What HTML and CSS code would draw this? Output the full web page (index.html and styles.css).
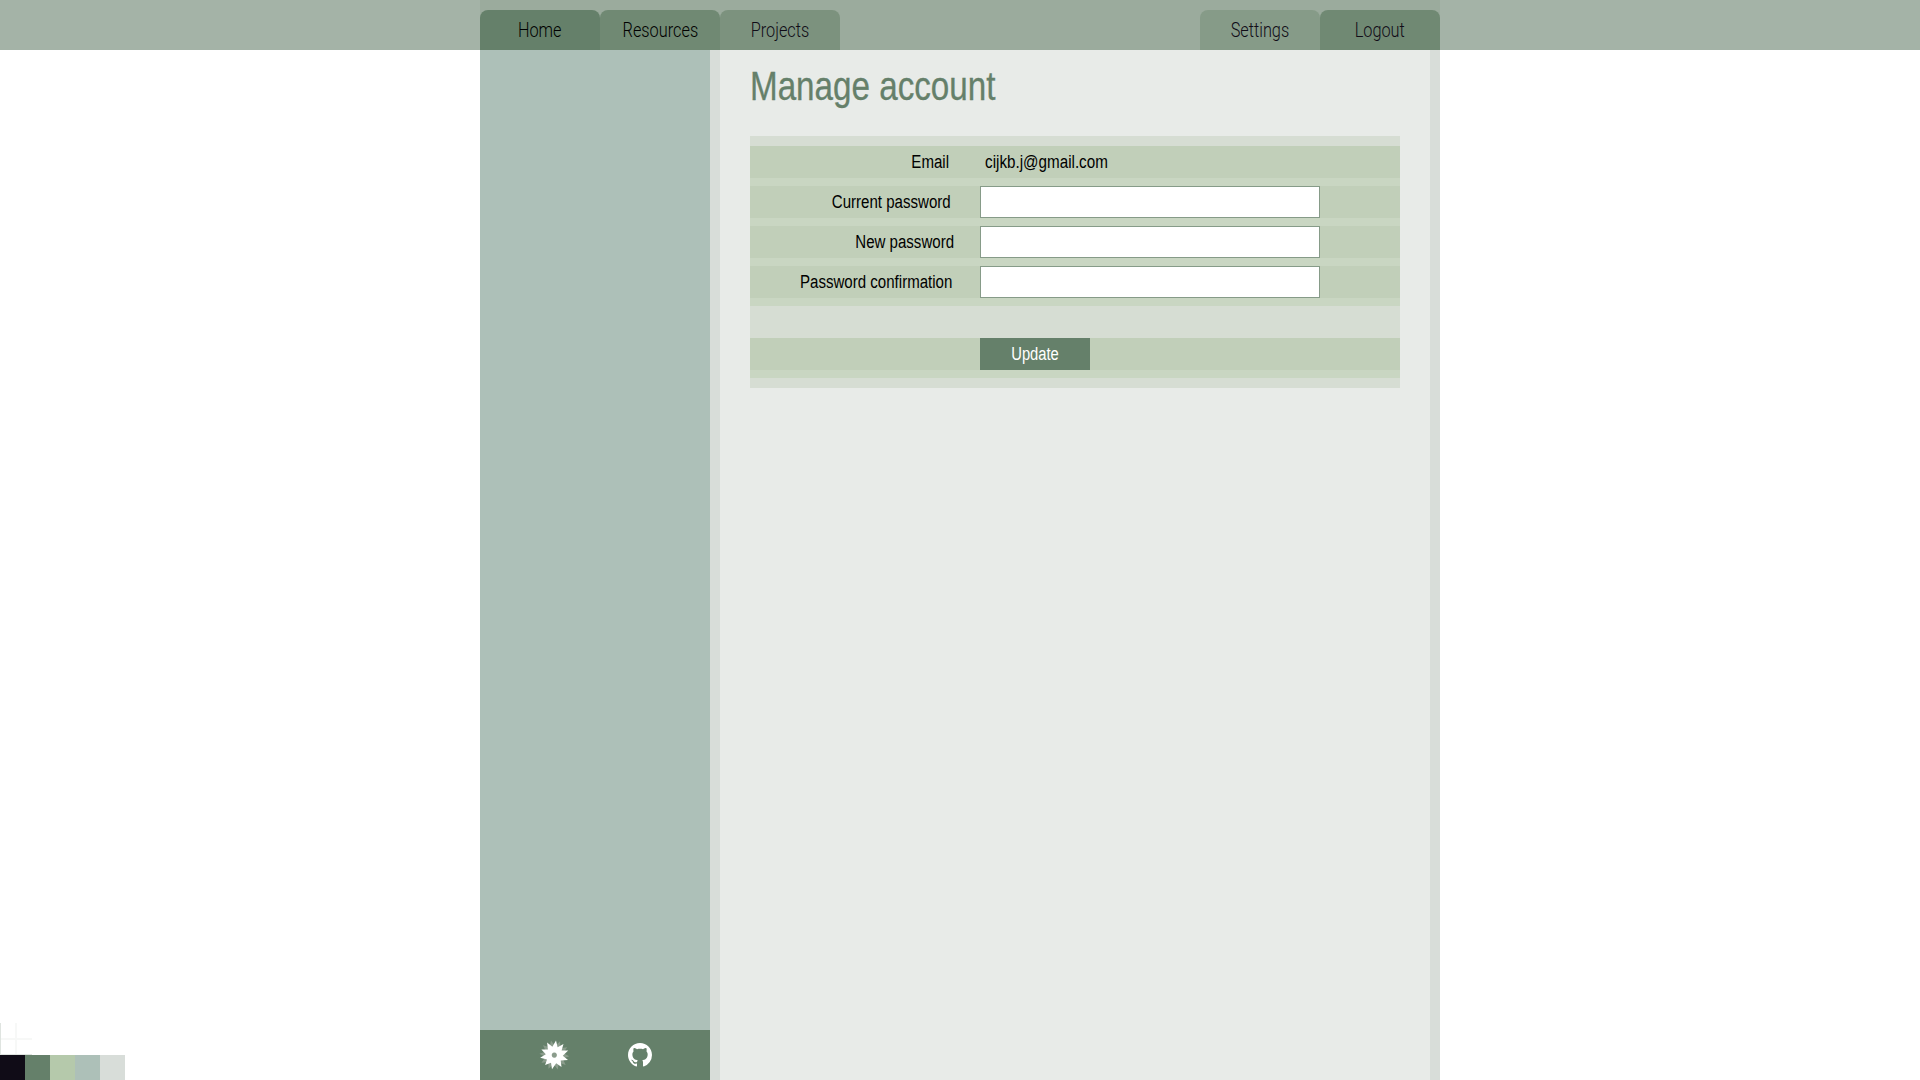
FILE: index.html
```
<!DOCTYPE html>
<html lang="en">
<head>
<meta charset="utf-8">
<title>Manage account</title>
<link rel="stylesheet" href="styles.css">
</head>
<body>
<header class="topbar">
  <nav class="nav">
    <a class="tab tab-home"><span>Home</span></a>
    <a class="tab tab-resources"><span>Resources</span></a>
    <a class="tab tab-projects"><span>Projects</span></a>
    <a class="tab tab-settings"><span>Settings</span></a>
    <a class="tab tab-logout"><span>Logout</span></a>
  </nav>
</header>
<div class="page">
  <aside class="sidebar">
    <footer class="links">
      <svg class="star" viewBox="0 0 32 32" width="32" height="32">
        <path fill="#8b9c8c" transform="rotate(18 16.300 16) translate(-1.100 -1.100) scale(1.070)" d="M9.100 4L14.400 7.700 17.500 2.100 19.600 8.200 25.500 5.400 23.600 11.600 29.900 12.900 24.800 16.700 29.200 21.500 22.700 21.600 23.500 28 18.200 24.300 15.100 29.900 13 23.800 7.100 26.600 9 20.400 2.700 19.100 7.800 15.300 3.400 10.500 9.900 10.400z"/>
        <path fill="#fff" fill-rule="evenodd" d="M9.100 3.500L14.400 7.700 18 1.600 19.600 8.200 25.500 5 23.600 11.600 30.200 11.500 24.800 16.700 30 21 22.700 21.600 23.500 28 18.200 24.300 14 30.300 13 23.800 7.100 26 9 20.400 2.200 18.800 7.800 15.300 3.400 10.500 9.900 10.400zM16.300 13.500a2.600 2.600 0 1 0 .01 0z"/>
      </svg>
      <svg class="github" viewBox="0 0 16 16" width="24" height="24">
        <path fill="#fff" d="M8 0C3.58 0 0 3.58 0 8c0 3.54 2.29 6.53 5.47 7.59.4.07.55-.17.55-.38 0-.19-.01-.82-.01-1.49-2.01.37-2.53-.49-2.69-.94-.09-.23-.48-.94-.82-1.13-.28-.15-.68-.52-.01-.53.63-.01 1.08.58 1.23.82.72 1.21 1.87.87 2.33.66.07-.52.28-.87.51-1.07-1.78-.2-3.64-.89-3.64-3.95 0-.87.31-1.59.82-2.15-.08-.2-.36-1.02.08-2.12 0 0 .67-.21 2.2.82.64-.18 1.32-.27 2-.27s1.36.09 2 .27c1.53-1.04 2.2-.82 2.2-.82.44 1.1.16 1.92.08 2.12.51.56.82 1.27.82 2.15 0 3.07-1.87 3.75-3.65 3.95.29.25.54.73.54 1.48 0 1.07-.01 1.93-.01 2.2 0 .21.15.46.55.38A8.01 8.01 0 0 0 16 8c0-4.42-3.58-8-8-8z"/>
      </svg>
    </footer>
  </aside>
  <main class="content">
    <h1 class="title">Manage account</h1>
    <form class="panel">
      <div class="row"><label class="label label-email">Email</label><span class="value">cijkb.j@gmail.com</span></div>
      <div class="row"><label class="label label-current">Current password</label><input class="field" type="password"></div>
      <div class="row"><label class="label label-new">New password</label><input class="field" type="password"></div>
      <div class="row"><label class="label label-confirm">Password confirmation</label><input class="field" type="password"></div>
      <div class="row row-submit"><button class="submit" type="button"><span>Update</span></button></div>
    </form>
  </main>
</div>
<div class="palette">
  <svg class="grid" width="32" height="32" viewBox="0 0 32 32">
    <path fill="#f7f8f7" d="M15 0h2v32h-2zM0 15h32v2H0z"/>
    <path fill="#dfe4e0" d="M0 0h1v32H0zM0 31h32v1H0z"/>
  </svg>
  <div class="swatches"><i class="ink"></i><i class="green"></i><i class="leaf"></i><i class="mist"></i><i class="fog"></i></div>
</div>
</body>
</html>
```
FILE: styles.css
```
* { box-sizing: border-box; }
body {
  margin: 0;
  height: 1080px;
  overflow: hidden;
  background: #fff;
  color: #000;
  font: 18px/32px "Liberation Sans", sans-serif;
}
.topbar { height: 50px; background: #a4b3a7; }
.nav {
  display: flex;
  width: 960px;
  height: 50px;
  margin: 0 auto;
  padding-top: 10px;
  background: #9bab9d;
}
.tab {
  width: 120px;
  height: 40px;
  border-radius: 8px 8px 0 0;
  text-align: center;
  font: 300 20px/40px Roboto, sans-serif;
  color: #100c17;
}
.tab span { display: inline-block; transform: scaleX(.815); }
.tab-home { background: #65806a; color: #000; }
.tab-resources { background: #708973; color: #000; }
.tab-projects { background: #7c927e; }
.tab-settings { background: #869b88; margin-left: auto; }
.tab-logout { background: #708973; }
.page { display: flex; width: 960px; height: 1030px; margin: 0 auto; }
.sidebar {
  display: flex;
  flex-direction: column;
  justify-content: flex-end;
  width: 230px;
  background: #adc0b8;
}
.links {
  display: flex;
  align-items: center;
  height: 50px;
  padding-left: 58px;
  background: #65806a;
}
.github { margin-left: 58px; }
.content {
  width: 730px;
  padding: 0 30px;
  border: solid #d8ddd9;
  border-width: 0 10px;
  background: #e8ebe8;
}
.title {
  height: 86px;
  margin: 0;
  padding-top: 12px;
  font-size: 40px;
  line-height: 48px;
  font-weight: 400;
  color: #65806a;
  white-space: nowrap;
  transform: scaleX(.83);
  transform-origin: left;
  -webkit-text-stroke: .3px currentColor;
}
.panel { height: 252px; padding: 10px 0; background: #d6ddd3; }
.row {
  display: flex;
  height: 40px;
  background: #c1cfb9;
  border-bottom: 8px solid #c9d6c2;
}
.row-submit { margin-top: 32px; padding-left: 230px; }
.label {
  width: 230px;
  text-align: right;
  white-space: nowrap;
  transform: scaleX(.837);
  transform-origin: right;
}
.label-email { padding-right: 37px; }
.label-current { padding-right: 35px; }
.label-new { padding-right: 31px; }
.label-confirm { padding-right: 33px; }
.value { padding-left: 6px; transform: scaleX(.845); transform-origin: left; }
.field {
  width: 340px;
  height: 32px;
  border: 1px solid #869b88;
  background: #fff;
  outline: 0;
}
.submit {
  width: 110px;
  height: 32px;
  padding: 0;
  border: 0;
  background: #65806a;
  color: #fff;
  font: inherit;
}
.submit span { display: inline-block; transform: scaleX(.82); }
.palette { position: absolute; left: 0; bottom: 0; }
.grid { display: block; }
.swatches { display: flex; }
.swatches i { width: 25px; height: 25px; }
.ink { background: #100c17; }
.green { background: #65806a; }
.leaf { background: #b5c9ab; }
.mist { background: #adc0b8; }
.fog { background: #d8ddd9; }
```
